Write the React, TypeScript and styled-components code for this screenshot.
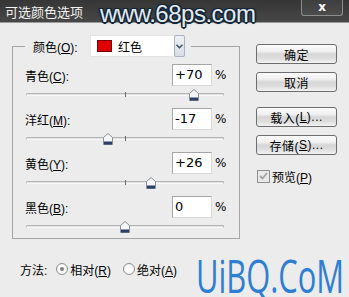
import React from 'react'
import styled, { createGlobalStyle } from 'styled-components'

// ── Data ──────────────────────────────────────────────────────────────────────

type Channel = { name: string; key: string; value: number }

const CHANNELS: Channel[] = [
  { name: '青色', key: 'C', value: 70 },
  { name: '洋红', key: 'M', value: -17 },
  { name: '黄色', key: 'Y', value: 26 },
  { name: '黑色', key: 'B', value: 0 },
]

const TRACK_W = 198

function fmt(v: number): string {
  if (v > 0) return `+${v}`
  return String(v)
}

// ── Styled ─────────────────────────────────────────────────────────────────────

const GlobalStyle = createGlobalStyle`
  html, body {
    margin: 0;
    padding: 0;
    background: #ececec;
  }
  body {
    font-family: "Liberation Sans", "Noto Sans CJK SC", sans-serif;
    font-size: 12px;
    color: #000;
  }
`

const Dialog = styled.div`
  position: relative;
  width: 349px;
  height: 297px;
  overflow: hidden;
  background: #ececec;
  display: flex;
  flex-direction: column;
`

const TitleBar = styled.div`
  height: 22px;
  flex-shrink: 0;
  display: flex;
  align-items: flex-start;
  background: linear-gradient(#363636, #474747);
  border-bottom: 1px solid #9a9a9a;
`

const Title = styled.span`
  padding: 4px 0 0 5px;
  font-family: "Noto Sans CJK SC", sans-serif;
  font-size: 13px;
  line-height: 15px;
  color: #f2f2f2;
`

const CloseButton = styled.div`
  margin-left: auto;
  margin-right: 6px;
  width: 40px;
  height: 15px;
  box-sizing: content-box;
  border: 1px solid #8d8d8d;
  border-top: none;
  border-radius: 0 0 3px 3px;
  background: linear-gradient(#3e3e3e, #4c4c4c);
  color: #fff;
  font-family: "DejaVu Sans", sans-serif;
  font-weight: bold;
  font-size: 12px;
  line-height: 14px;
  text-align: center;
`

const SiteMark = styled.span`
  position: absolute;
  left: 100px;
  top: -1px;
  font-family: "Liberation Sans", sans-serif;
  font-size: 24px;
  line-height: 30px;
  color: #e4ecee;
  letter-spacing: -0.5px;
  text-shadow:
    1.5px 0 0 #14263a, -1.5px 0 0 #14263a, 0 1.5px 0 #14263a, 0 -1.5px 0 #14263a,
    1.2px 1.2px 0 #14263a, -1.2px -1.2px 0 #14263a, 1.2px -1.2px 0 #14263a, -1.2px 1.2px 0 #14263a,
    0 0 3px #14263a;
`

// narrow site logo in the bottom corner, drawn over the dialog
const CornerMark = styled.svg`
  position: absolute;
  left: 194px;
  top: 258px;
  width: 155px;
  height: 39px;
`

const Body = styled.div`
  display: flex;
  padding-left: 12px;
`

const LeftCol = styled.div`
  width: 228px;
  flex-shrink: 0;
`

const RightCol = styled.div`
  width: 81px;
  margin-left: 16px;
  padding-top: 21px;
  display: flex;
  flex-direction: column;
`

const Group = styled.fieldset`
  margin: 12px 0 0;
  padding: 0 13px 0 12px;
  border: 1px solid #a6a6a6;
  min-width: 0;
`

const Legend = styled.legend`
  padding: 0 6px 0 8px;
  display: flex;
  align-items: center;
  height: 22px;
`

const LegendLabel = styled.span`
  width: 57px;
`

const U = styled.span`
  text-decoration: underline;
`

const ColorSelect = styled.div`
  width: 95px;
  height: 22px;
  box-sizing: border-box;
  background: #fff;
  border: 1px solid #e4e4e4;
  display: flex;
  align-items: center;
`

const Swatch = styled.span`
  width: 15px;
  height: 12px;
  margin-left: 6px;
  background: #e00000;
  border: 1px solid #7a0000;
  box-sizing: border-box;
`

const SelectText = styled.span`
  margin-left: 6px;
  flex: 1;
  font-family: "Noto Sans CJK SC", sans-serif;
`

const ArrowBtn = styled.span`
  width: 11px;
  height: 22px;
  margin-right: -1px;
  box-sizing: border-box;
  border: 1px solid #a9b3c2;
  border-radius: 2px;
  background: linear-gradient(#eef1f5, #d8dde6);
  display: flex;
  align-items: center;
  justify-content: center;
`

const Rows = styled.div`
  padding-top: 7px;
`

const Row = styled.div``

const LabelLine = styled.div`
  height: 22px;
  display: flex;
  align-items: center;
`

const RowLabel = styled.span`
  flex: 1;
`

const ValueBox = styled.div`
  width: 40px;
  height: 22px;
  box-sizing: border-box;
  background: #fff;
  border: 1px solid #a5a5a5;
  border-right-color: #d8d8d8;
  border-bottom-color: #d8d8d8;
  padding-left: 2px;
  font-family: "DejaVu Sans", sans-serif;
  font-size: 13px;
  line-height: 20px;
`

const Percent = styled.span`
  width: 11px;
  margin-left: 3px;
  font-family: "DejaVu Sans", sans-serif;
  font-size: 12px;
`

const SliderArea = styled.div<{ $last?: boolean }>`
  position: relative;
  height: ${(p) => (p.$last ? 20 : 22)}px;
`

const Groove = styled.div`
  position: absolute;
  left: 1px;
  top: 7px;
  width: ${TRACK_W}px;
  height: 3px;
  box-sizing: border-box;
  border: 1px solid #b4b4b4;
  border-bottom-color: #f8f8f8;
  border-radius: 2px;
  background: #e2e2e2;
`

const Tick = styled.div`
  position: absolute;
  left: 100px;
  top: 6px;
  width: 1px;
  height: 5px;
  background: #6a6a6a;
`

const Thumb = styled.svg`
  position: absolute;
  top: 3px;
  width: 10px;
  height: 12px;
`

const MethodRow = styled.div`
  margin-top: 22px;
  padding-left: 8px;
  height: 16px;
  display: flex;
  align-items: center;
`

const MethodLabel = styled.span`
  margin-right: 9px;
`

const Radio = styled.span<{ $checked?: boolean }>`
  width: 12px;
  height: 12px;
  box-sizing: border-box;
  border-radius: 50%;
  border: 1px solid #8f8f8f;
  background: radial-gradient(circle, #ffffff 40%, #e4e4e4 100%);
  display: flex;
  align-items: center;
  justify-content: center;

  &::after {
    content: '';
    width: 4px;
    height: 4px;
    border-radius: 50%;
    background: ${(p) => (p.$checked ? '#7d7d7d' : 'transparent')};
  }
`

const RadioText = styled.span<{ $gap?: number }>`
  margin-left: 2px;
  margin-right: ${(p) => p.$gap ?? 0}px;
`

const Button = styled.div<{ $gap?: number }>`
  height: 20px;
  box-sizing: border-box;
  margin-bottom: ${(p) => p.$gap ?? 8}px;
  border: 1px solid #6e6e6e;
  border-radius: 3px;
  background: linear-gradient(#fbfbfb 0%, #f0f0f0 35%, #d6d6d6 50%, #dedede 75%, #f2f2f2 100%);
  display: flex;
  align-items: center;
  justify-content: center;
  letter-spacing: 0.5px;
`

const CheckLine = styled.div`
  display: flex;
  align-items: center;
  height: 14px;
  margin-left: 1px;
`

const CheckBox = styled.span`
  width: 13px;
  height: 13px;
  box-sizing: border-box;
  border: 1px solid #8e8e8e;
  background: #e9e9e9;
  display: flex;
  align-items: center;
  justify-content: center;
  margin-right: 2px;
`

// ── Parts ─────────────────────────────────────────────────────────────────────

function Slider({ value, last }: { value: number; last?: boolean }) {
  const x = 1 + ((value + 100) / 200) * TRACK_W - 5
  return (
    <SliderArea $last={last}>
      <Groove />
      <Tick />
      <Thumb viewBox="0 0 10 12" style={{ left: x }}>
        <path d="M5 0.5 L9.5 4.5 L9.5 11.5 L0.5 11.5 L0.5 4.5 Z" fill="#f4f6f8" stroke="#8a8f96" />
        <rect x="1" y="8.5" width="8" height="3" fill="#2a3f66" />
      </Thumb>
    </SliderArea>
  )
}

// ── App ───────────────────────────────────────────────────────────────────────

export default function App() {
  return (
    <Dialog>
      <GlobalStyle />
      <TitleBar>
        <Title>可选颜色选项</Title>
        <CloseButton>x</CloseButton>
      </TitleBar>
      <SiteMark>www.68ps.com</SiteMark>

      <Body>
        <LeftCol>
          <Group>
            <Legend>
              <LegendLabel>颜色(<U>O</U>):</LegendLabel>
              <ColorSelect>
                <Swatch />
                <SelectText>红色</SelectText>
                <ArrowBtn>
                  <svg width="7" height="5" viewBox="0 0 7 5">
                    <path d="M0.5 0.8 L3.5 3.8 L6.5 0.8" fill="none" stroke="#3d4b63" strokeWidth="1.4" />
                  </svg>
                </ArrowBtn>
              </ColorSelect>
            </Legend>

            <Rows>
              {CHANNELS.map((c, i) => (
                <Row key={c.key}>
                  <LabelLine>
                    <RowLabel>
                      {c.name}(<U>{c.key}</U>):
                    </RowLabel>
                    <ValueBox>{fmt(c.value)}</ValueBox>
                    <Percent>%</Percent>
                  </LabelLine>
                  <Slider value={c.value} last={i === CHANNELS.length - 1} />
                </Row>
              ))}
            </Rows>
          </Group>

          <MethodRow>
            <MethodLabel>方法:</MethodLabel>
            <Radio $checked />
            <RadioText $gap={12}>相对(<U>R</U>)</RadioText>
            <Radio />
            <RadioText>绝对(<U>A</U>)</RadioText>
          </MethodRow>
        </LeftCol>

        <RightCol>
          <Button>确定</Button>
          <Button $gap={15}>取消</Button>
          <Button>载入(<U>L</U>)...</Button>
          <Button $gap={14}>存储(<U>S</U>)...</Button>
          <CheckLine>
            <CheckBox>
              <svg width="9" height="8" viewBox="0 0 9 8">
                <path d="M1 4 L3.5 6.5 L8 1" fill="none" stroke="#a2a2a2" strokeWidth="1.8" />
              </svg>
            </CheckBox>
            <span>预览(<U>P</U>)</span>
          </CheckLine>
        </RightCol>
      </Body>

      <CornerMark viewBox="0 0 155 39">
        <text
          x="2"
          y="35"
          textLength="148"
          lengthAdjust="spacingAndGlyphs"
          fontFamily="Open Sans, sans-serif"
          fontSize="46"
          fill="#2e7fd1"
        >
          UiBQ.CoM
        </text>
      </CornerMark>
    </Dialog>
  )
}
